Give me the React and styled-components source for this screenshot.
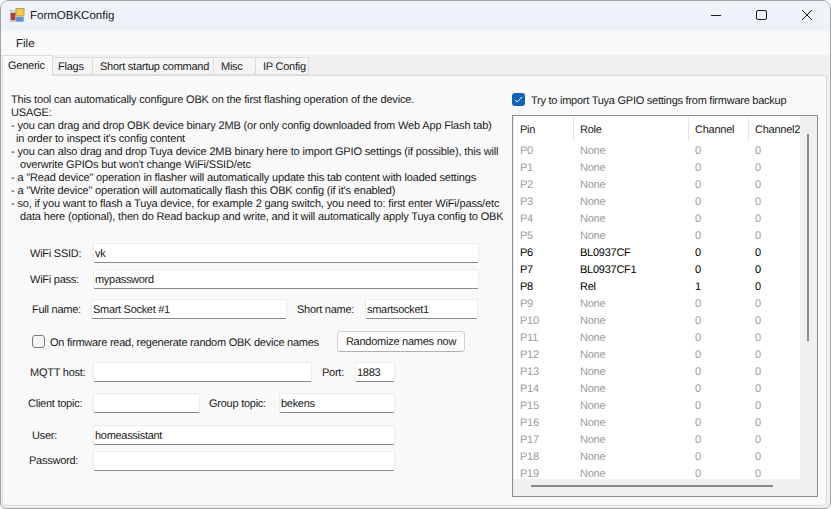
import React from "react";
import styled, { createGlobalStyle } from "styled-components";

const usage = [
    { text: "This tool can automatically configure OBK on the first flashing operation of the device." },
    { text: "USAGE:" },
    { text: "- you can drag and drop OBK device binary 2MB (or only config downloaded from Web App Flash tab)" },
    { text: "in order to inspect it's config content", indent: 5 },
    { text: "- you can also drag and drop Tuya device 2MB binary here to import GPIO settings (if possible), this will" },
    { text: "overwrite GPIOs but won't change WiFi/SSID/etc", indent: 9 },
    { text: "- a \"Read device\" operation in flasher will automatically update this tab content with loaded settings" },
    { text: "- a \"Write device\" operation will automatically flash this OBK config (if it's enabled)" },
    { text: "- so, if you want to flash a Tuya device, for example 2 gang switch, you need to: first enter WiFi/pass/etc" },
    { text: "data here (optional), then do Read backup and write, and it will automatically apply Tuya config to OBK", indent: 9 },
];

const tabs = [
    { name: "Generic", width: 51, inset: 5 },
    { name: "Flags", width: 40, inset: 5 },
    { name: "Short startup command", width: 121, inset: 7 },
    { name: "Misc", width: 42, inset: 7 },
    { name: "IP Config", width: 53, inset: 7 },
];

const pins = Array.from({ length: 20 }, (_, i) => {
    if (i === 6) return { name: "P6", role: "BL0937CF", ch: 0, ch2: 0, active: true };
    if (i === 7) return { name: "P7", role: "BL0937CF1", ch: 0, ch2: 0, active: true };
    if (i === 8) return { name: "P8", role: "Rel", ch: 1, ch2: 0, active: true };
    return { name: "P" + i, role: "None", ch: 0, ch2: 0, active: false };
});

function App() {
    return (
        <>
            <GlobalStyle />
            <Window>
                <DesktopSliver />
                <TitleBar>
                    <AppIcon viewBox="0 0 15 15">
                        <rect x="0.5" y="2.5" width="5" height="11" fill="#e4e7ec" stroke="#a8acb3" strokeWidth="0.6" />
                        <rect x="6" y="0.5" width="8" height="7.5" fill="#f6c94a" stroke="#b0924a" strokeWidth="0.8" />
                        <rect x="1" y="5" width="4" height="7" fill="#c9332b" stroke="#8a4a46" strokeWidth="0.5" />
                        <rect x="6" y="9" width="7.5" height="4.5" fill="#5d8fd8" stroke="#8aa0c0" strokeWidth="0.5" />
                    </AppIcon>
                    <WindowTitle>FormOBKConfig</WindowTitle>
                    <WindowButtons>
                        <CaptionButton>
                            <svg width="12" height="12" viewBox="0 0 12 12">
                                <path d="M2 6.5h10" stroke="#1a1a1a" strokeWidth="1" />
                            </svg>
                        </CaptionButton>
                        <CaptionButton>
                            <svg width="12" height="12" viewBox="0 0 12 12">
                                <rect x="1.5" y="1.5" width="10" height="9" rx="1.5" fill="none" stroke="#1a1a1a" strokeWidth="1" />
                            </svg>
                        </CaptionButton>
                        <CaptionButton>
                            <svg width="12" height="12" viewBox="0 0 12 12">
                                <path d="M1 1l10 10M11 1L1 11" stroke="#1a1a1a" strokeWidth="1" />
                            </svg>
                        </CaptionButton>
                    </WindowButtons>
                </TitleBar>
                <MenuBar>
                    <MenuItem>File</MenuItem>
                </MenuBar>
                <TabStrip>
                    {tabs.map((tab, i) => (
                        <Tab key={tab.name} $active={i === 0} $width={tab.width} $inset={tab.inset}>
                            {tab.name}
                        </Tab>
                    ))}
                </TabStrip>
                <Panel>
                    <LeftColumn>
                        <Usage>
                            {usage.map((line) => (
                                <UsageLine key={line.text} $indent={line.indent}>
                                    {line.text}
                                </UsageLine>
                            ))}
                        </Usage>
                        <Form>
                            <FormRow $top={0}>
                                <FieldLabel $left={27} $width={63}>WiFi SSID:</FieldLabel>
                                <Input $width={386} defaultValue="vk" />
                            </FormRow>
                            <FormRow $top={6}>
                                <FieldLabel $left={27} $width={63}>WiFi pass:</FieldLabel>
                                <Input $width={386} defaultValue="mypassword" />
                            </FormRow>
                            <FormRow $top={10}>
                                <FieldLabel $left={29} $width={59}>Full name:</FieldLabel>
                                <Input $width={196} defaultValue="Smart Socket #1" />
                                <FieldLabel $left={10} $width={68}>Short name:</FieldLabel>
                                <Input $width={113} defaultValue="smartsocket1" />
                            </FormRow>
                            <CheckRow>
                                <CheckBox />
                                <CheckLabel>On firmware read, regenerate random OBK device names</CheckLabel>
                                <Button>Randomize names now</Button>
                            </CheckRow>
                            <FormRow $top={10}>
                                <FieldLabel $left={27} $width={63}>MQTT host:</FieldLabel>
                                <Input $width={219} />
                                <FieldLabel $left={10} $width={33}>Port:</FieldLabel>
                                <Input $width={40} defaultValue="1883" />
                            </FormRow>
                            <FormRow $top={11}>
                                <FieldLabel $left={25} $width={65}>Client topic:</FieldLabel>
                                <Input $width={107} />
                                <FieldLabel $left={9} $width={70}>Group topic:</FieldLabel>
                                <Input $width={116} defaultValue="bekens" />
                            </FormRow>
                            <FormRow $top={12}>
                                <FieldLabel $left={29} $width={61}>User:</FieldLabel>
                                <Input $width={302} defaultValue="homeassistant" />
                            </FormRow>
                            <FormRow $top={6}>
                                <FieldLabel $left={26} $width={64} $raised>Password:</FieldLabel>
                                <Input $width={302} />
                            </FormRow>
                        </Form>
                    </LeftColumn>
                    <RightColumn>
                        <ImportRow>
                            <CheckedBox>
                                <svg width="9" height="9" viewBox="0 0 9 9">
                                    <path d="M1 4.8l2.2 2.2L8 2" fill="none" stroke="#fff" strokeWidth="1" />
                                </svg>
                            </CheckedBox>
                            <ImportLabel>Try to import Tuya GPIO settings from firmware backup</ImportLabel>
                        </ImportRow>
                        <TableBox>
                            <TableArea>
                                <TableHeader>
                                    <HeaderCell $width={60}>Pin</HeaderCell>
                                    <HeaderCell $width={115}>Role</HeaderCell>
                                    <HeaderCell $width={60}>Channel</HeaderCell>
                                    <HeaderCell $width={51} $last>Channel2</HeaderCell>
                                </TableHeader>
                                <TableBody>
                                    {pins.map((pin) => (
                                        <PinRow key={pin.name} $active={pin.active}>
                                            <PinCell $width={60}>{pin.name}</PinCell>
                                            <PinCell $width={115}>{pin.role}</PinCell>
                                            <PinCell $width={60}>{pin.ch}</PinCell>
                                            <PinCell $width={51}>{pin.ch2}</PinCell>
                                        </PinRow>
                                    ))}
                                </TableBody>
                            </TableArea>
                            <VerticalScroll>
                                <VerticalThumb />
                            </VerticalScroll>
                            <HorizontalScroll>
                                <HorizontalThumb />
                            </HorizontalScroll>
                        </TableBox>
                    </RightColumn>
                </Panel>
            </Window>
        </>
    );
}

export default App;

const GlobalStyle = createGlobalStyle`
    html, body {
        margin: 0;
        padding: 0;
        background: #ffffff;
    }
    body {
        font-family: "Liberation Sans", Arial, sans-serif;
        font-size: 11px;
        letter-spacing: -0.25px;
        text-rendering: geometricPrecision;
    }
`;

const Window = styled.div`
    position: relative;
    width: 831px;
    height: 509px;
    box-sizing: border-box;
    background: #f0f0f0;
    border: 1px solid #a3a3a3;
    border-radius: 8px 8px 6px 6px;
    overflow: hidden;
    display: flex;
    flex-direction: column;
    color: #1a1a1a;
`;

const DesktopSliver = styled.div`
    position: absolute;
    top: -1px;
    left: 658px;
    width: 52px;
    height: 1px;
    background: #d9605a;
`;

const TitleBar = styled.div`
    height: 30px;
    flex: none;
    display: flex;
    align-items: center;
    background: #eef3f9;
    padding-left: 9px;
`;

const AppIcon = styled.svg`
    width: 15px;
    height: 15px;
    margin-bottom: 1px;
`;

const WindowTitle = styled.div`
    margin-left: 5px;
    font-size: 11.5px;
    letter-spacing: 0;
`;

const WindowButtons = styled.div`
    margin-left: auto;
    display: flex;
`;

const CaptionButton = styled.div`
    width: 46px;
    height: 30px;
    display: flex;
    align-items: center;
    justify-content: center;
    padding-bottom: 2px;
    box-sizing: border-box;
`;

const MenuBar = styled.div`
    height: 24px;
    flex: none;
    display: flex;
    align-items: center;
    background: #f9f9f9;
    padding-left: 15px;
`;

const MenuItem = styled.div`
    font-size: 11.5px;
    letter-spacing: 0;
    padding-top: 2px;
`;

const TabStrip = styled.div`
    height: 20px;
    flex: none;
    display: flex;
    align-items: flex-end;
    padding-left: 1px;
`;

const Tab = styled.div`
    box-sizing: border-box;
    width: ${(p) => p.$width}px;
    height: ${(p) => (p.$active ? "21px" : "18px")};
    margin-bottom: ${(p) => (p.$active ? "-1px" : "0")};
    padding-left: ${(p) => p.$inset}px;
    padding-top: ${(p) => (p.$active ? "0" : "2px")};
    background: ${(p) => (p.$active ? "#f9f9f9" : "#f5f5f5")};
    border: 1px solid #dcdcdc;
    border-bottom: ${(p) => (p.$active ? "none" : "1px solid #dcdcdc")};
    border-left: ${(p) => (p.$active ? "1px solid #dcdcdc" : "none")};
    display: flex;
    align-items: center;
    white-space: nowrap;
    position: relative;
    z-index: ${(p) => (p.$active ? 1 : 0)};
`;

const Panel = styled.div`
    flex: 1;
    margin: 0 3px 2px 1px;
    background: #f9f9f9;
    border: 1px solid #dcdcdc;
    border-radius: 0 0 5px 5px;
    display: flex;
`;

const LeftColumn = styled.div`
    width: 509px;
    flex: none;
    padding-top: 18px;
    box-sizing: border-box;
`;

const Usage = styled.div`
    margin-left: 8px;
    line-height: 13px;
    letter-spacing: -0.157px;
`;

const UsageLine = styled.div`
    padding-left: ${(p) => p.$indent || 0}px;
    white-space: nowrap;
`;

const Form = styled.div`
    margin-top: 19px;
    display: flex;
    flex-direction: column;
`;

const FormRow = styled.div`
    display: flex;
    align-items: center;
    margin-top: ${(p) => p.$top}px;
`;

const FieldLabel = styled.div`
    margin-left: ${(p) => p.$left}px;
    width: ${(p) => p.$width}px;
    padding-top: ${(p) => (p.$raised ? "0" : "2px")};
    white-space: nowrap;
`;

const Input = styled.input`
    box-sizing: border-box;
    width: ${(p) => p.$width}px;
    height: 20px;
    padding: 1px 1px 0;
    border: 1px solid #ececec;
    border-bottom: 1px solid #8a8a8a;
    border-radius: 2px;
    background: #ffffff;
    font-family: "Liberation Sans", Arial, sans-serif;
    font-size: 11px;
    letter-spacing: -0.3px;
    text-rendering: geometricPrecision;
    color: #1a1a1a;
    outline: none;
`;

const CheckRow = styled.div`
    display: flex;
    align-items: center;
    margin-top: 12px;
    margin-left: 29px;
`;

const CheckBox = styled.div`
    box-sizing: border-box;
    flex: none;
    width: 13px;
    height: 13px;
    border: 1px solid #7a7a7a;
    border-radius: 3px;
    background: #f6f6f6;
`;

const CheckLabel = styled.div`
    margin-left: 5px;
    width: 287px;
    padding-top: 2px;
    white-space: nowrap;
`;

const Button = styled.div`
    box-sizing: border-box;
    width: 128px;
    height: 21px;
    padding-top: 1px;
    border: 1px solid #d0d0d0;
    border-bottom-color: #b0b0b0;
    border-radius: 4px;
    background: #fdfdfd;
    display: flex;
    align-items: center;
    justify-content: center;
    white-space: nowrap;
`;

const RightColumn = styled.div`
    flex: 1;
    display: flex;
    flex-direction: column;
    min-width: 0;
`;

const ImportRow = styled.div`
    display: flex;
    align-items: center;
    margin-top: 17px;
    height: 13px;
`;

const CheckedBox = styled.div`
    width: 13px;
    height: 13px;
    border-radius: 3px;
    background: #0f62b8;
    display: flex;
    align-items: center;
    justify-content: center;
`;

const ImportLabel = styled.div`
    margin-left: 6px;
    padding-top: 2px;
    white-space: nowrap;
`;

const TableBox = styled.div`
    position: relative;
    box-sizing: border-box;
    width: 306px;
    height: 382px;
    margin-top: 9px;
    border: 1px solid #8a8d93;
    background: #f0f0f0;
    overflow: hidden;
`;

const TableArea = styled.div`
    width: 286px;
    height: 363px;
    background: #ffffff;
    margin-left: 1px;
    overflow: hidden;
`;

const TableHeader = styled.div`
    display: flex;
    height: 26px;
    align-items: center;
`;

const HeaderCell = styled.div`
    box-sizing: border-box;
    width: ${(p) => p.$width}px;
    height: 24px;
    padding-left: 6px;
    padding-top: 1px;
    display: flex;
    align-items: center;
    white-space: nowrap;
    overflow: hidden;
    border-right: ${(p) => (p.$last ? "none" : "1px solid #e5e5e5")};
`;

const TableBody = styled.div`
    display: flex;
    flex-direction: column;
`;

const PinRow = styled.div`
    display: flex;
    height: 17px;
    align-items: center;
    color: ${(p) => (p.$active ? "#000000" : "#9b9b9b")};
`;

const PinCell = styled.div`
    box-sizing: border-box;
    width: ${(p) => p.$width}px;
    padding-left: 6px;
`;

const VerticalScroll = styled.div`
    position: absolute;
    top: 0;
    right: 0;
    bottom: 0;
    width: 17px;
    background: #f0f0f0;
`;

const VerticalThumb = styled.div`
    position: absolute;
    top: 18px;
    left: 7px;
    width: 2px;
    height: 207px;
    background: #8a8a8a;
`;

const HorizontalScroll = styled.div`
    position: absolute;
    left: 0;
    right: 17px;
    bottom: 0;
    height: 17px;
    background: #f0f0f0;
`;

const HorizontalThumb = styled.div`
    position: absolute;
    top: 6px;
    left: 18px;
    width: 242px;
    height: 2px;
    background: #8a8a8a;
`;
